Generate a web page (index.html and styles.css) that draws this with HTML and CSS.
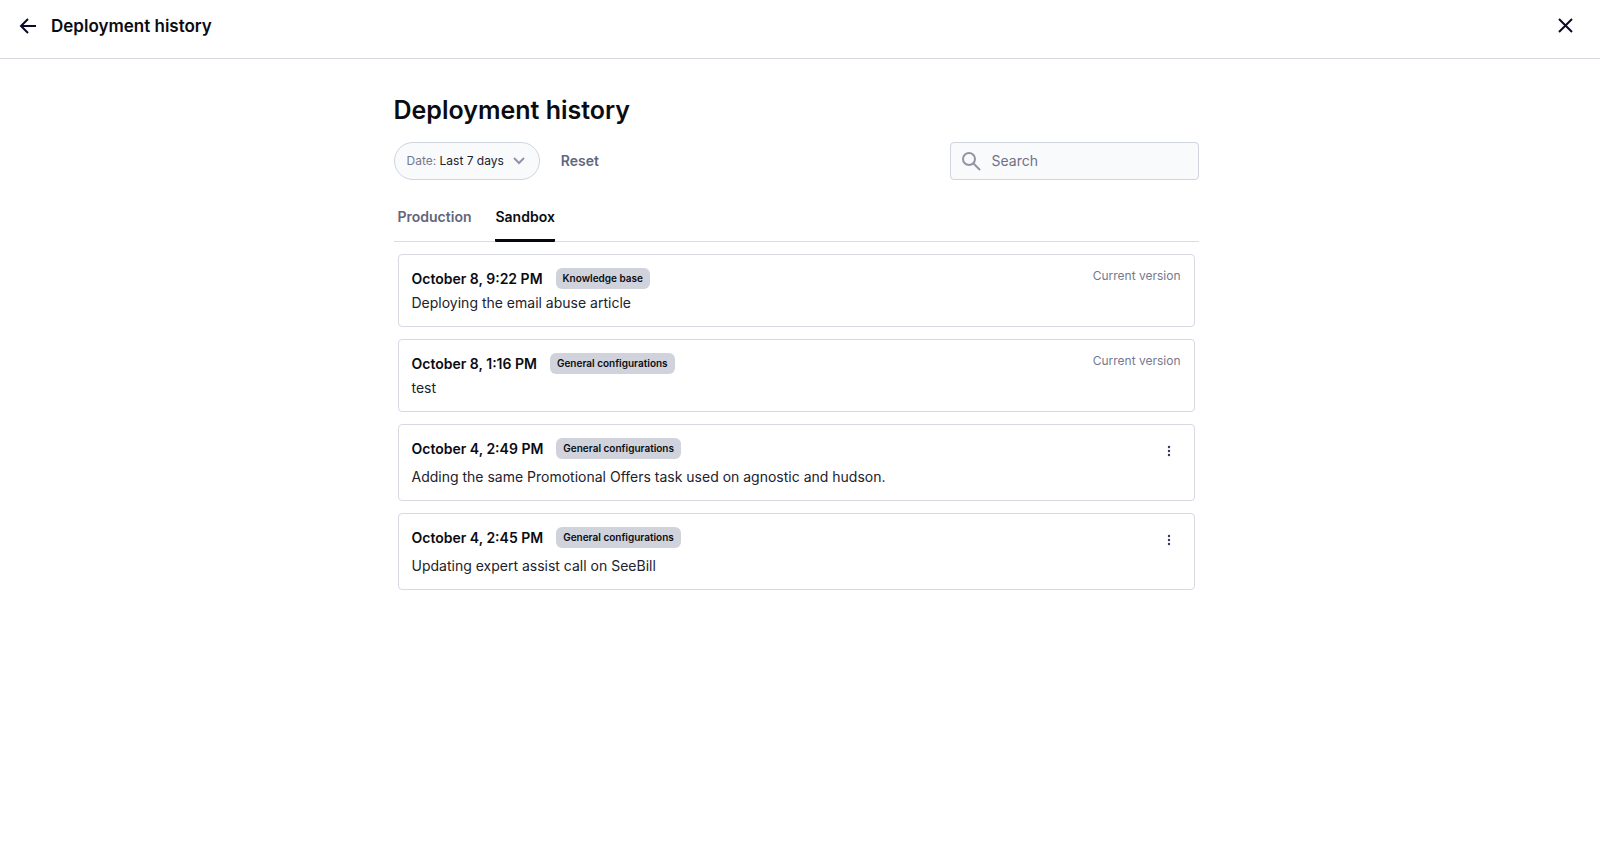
FILE: index.html
```html
<!DOCTYPE html>
<html lang="en">
<head>
    <meta charset="UTF-8">
    <title>Deployment history</title>
    <link rel="stylesheet" href="styles.css">
</head>
<body>
<header class="top-bar">
    <button class="icon-button" type="button" aria-label="Back">
        <svg width="24" height="24" viewBox="0 0 24 24"><path d="M20 12H5M12 5l-7 7 7 7"/></svg>
    </button>
    <span class="top-title">Deployment history</span>
    <button class="icon-button close-button" type="button" aria-label="Close">
        <svg width="24" height="24" viewBox="0 0 24 24"><path d="M6 5l13 13M19 5L6 18"/></svg>
    </button>
</header>

<main class="content">
    <h1>Deployment history</h1>

    <div class="filters">
        <button class="date-filter" type="button">
            <span><span class="filter-label">Date:</span> Last 7 days</span>
            <svg width="14" height="8" viewBox="0 0 14 8"><path d="M2 1l5 5 5-5"/></svg>
        </button>
        <button class="reset-button" type="button">Reset</button>
        <label class="search">
            <svg width="20" height="20" viewBox="0 0 20 20"><circle cx="8" cy="8" r="6"/><path d="M12 12l7 7"/></svg>
            <input type="text" placeholder="Search" aria-label="Search">
        </label>
    </div>

    <nav class="tabs">
        <a class="tab" href="#production">Production</a>
        <a class="tab active" href="#sandbox">Sandbox</a>
    </nav>

    <div class="deployments">
        <article class="card">
            <div class="card-head">
                <h2>October 8, 9:22 PM</h2>
                <span class="badge">Knowledge base</span>
                <span class="current">Current version</span>
            </div>
            <p>Deploying the email abuse article</p>
        </article>
        <article class="card">
            <div class="card-head">
                <h2>October 8, 1:16 PM</h2>
                <span class="badge">General configurations</span>
                <span class="current">Current version</span>
            </div>
            <p>test</p>
        </article>
        <article class="card">
            <div class="card-head">
                <h2>October 4, 2:49 PM</h2>
                <span class="badge">General configurations</span>
                <button class="menu-button" type="button" aria-label="More options">
                    <svg width="4" height="12" viewBox="0 0 4 12"><circle cx="2" cy="2" r="1.2"/><circle cx="2" cy="6" r="1.2"/><circle cx="2" cy="10" r="1.2"/></svg>
                </button>
            </div>
            <p>Adding the same Promotional Offers task used on agnostic and hudson.</p>
        </article>
        <article class="card">
            <div class="card-head">
                <h2>October 4, 2:45 PM</h2>
                <span class="badge">General configurations</span>
                <button class="menu-button" type="button" aria-label="More options">
                    <svg width="4" height="12" viewBox="0 0 4 12"><circle cx="2" cy="2" r="1.2"/><circle cx="2" cy="6" r="1.2"/><circle cx="2" cy="10" r="1.2"/></svg>
                </button>
            </div>
            <p>Updating expert assist call on SeeBill</p>
        </article>
    </div>
</main>
</body>
</html>
```
FILE: styles.css
```css
* {
    box-sizing: border-box;
}

body {
    margin: 0;
    background-color: #fff;
    color: #0b0b12;
    font-family: Inter, "Liberation Sans", sans-serif;
    font-size: 14px;
    line-height: 20px;
}

h1, h2, p {
    margin: 0;
}

button {
    padding: 0;
    border: none;
    background: none;
    color: inherit;
    font: inherit;
    cursor: pointer;
}

svg {
    display: block;
    fill: none;
    stroke: currentColor;
    stroke-width: 2;
}

.top-bar {
    display: flex;
    align-items: center;
    gap: 11px;
    padding: 14px 23px 20px 16px;
    border-bottom: 1px solid #d6d8e4;
}

.icon-button {
    color: #0a0a28;
}

.top-title {
    font-size: 17px;
    font-weight: 600;
    line-height: 24px;
}

.close-button {
    margin-left: auto;
}

.content {
    max-width: 821px;
    margin: 0 auto;
    padding: 35px 12px 35px 4px;
}

h1 {
    font-size: 25px;
    font-weight: 600;
    line-height: 32px;
}

.filters {
    display: flex;
    align-items: center;
    margin-top: 16px;
}

.date-filter {
    display: flex;
    align-items: center;
    gap: 8px;
    height: 38px;
    padding: 0 13px 0 12px;
    border: 1px solid #cfd4de;
    border-radius: 19px;
    background-color: #f9fafc;
    color: #22222c;
    font-size: 12px;
}

.date-filter svg {
    color: #9194a6;
}

.filter-label {
    color: #757990;
}

.reset-button {
    margin-left: 21px;
    color: #62667d;
    font-weight: 600;
}

.search {
    display: flex;
    align-items: center;
    gap: 11px;
    width: 249px;
    height: 38px;
    margin-left: auto;
    padding: 0 10px;
    border: 1px solid #cfd4de;
    border-radius: 4px;
    background-color: #f9fafc;
}

.search svg {
    flex: none;
    color: #9294a5;
}

.search input {
    width: 100%;
    min-width: 0;
    padding: 0;
    border: none;
    outline: none;
    background: none;
    font: inherit;
}

.search input::placeholder {
    color: #6d7188;
    opacity: 1;
}

.tabs {
    display: flex;
    gap: 24px;
    margin-top: 19px;
    padding: 0 4px;
    border-bottom: 1px solid #d9dbe5;
}

.tab {
    margin-bottom: -1px;
    padding: 8px 0 12px;
    border-bottom: 3px solid transparent;
    color: #62667d;
    font-weight: 600;
    text-decoration: none;
}

.tab.active {
    border-color: #06060e;
    border-radius: 1px;
    color: #0b0b12;
}

.deployments {
    display: flex;
    flex-direction: column;
    gap: 12px;
    padding: 12px 4px;
}

.card {
    padding: 13px;
    border: 1px solid #d6d9e3;
    border-radius: 4px;
}

.card-head {
    display: flex;
    align-items: flex-start;
    margin-bottom: 4px;
}

.card h2 {
    font-size: 14px;
    font-weight: 600;
    line-height: 21px;
}

.card p {
    color: #22222c;
}

.badge {
    margin-left: 13px;
    padding: 0 7px;
    border-radius: 6px;
    background-color: #d0d3db;
    font-size: 10px;
    font-weight: 600;
    line-height: 21px;
}

.current {
    margin-left: auto;
    color: #757990;
    font-size: 12px;
    line-height: 16px;
}

.menu-button {
    display: flex;
    align-items: center;
    justify-content: center;
    width: 24px;
    height: 25px;
    margin-left: auto;
    color: #35385a;
}

.menu-button svg {
    fill: currentColor;
    stroke: none;
}
```
